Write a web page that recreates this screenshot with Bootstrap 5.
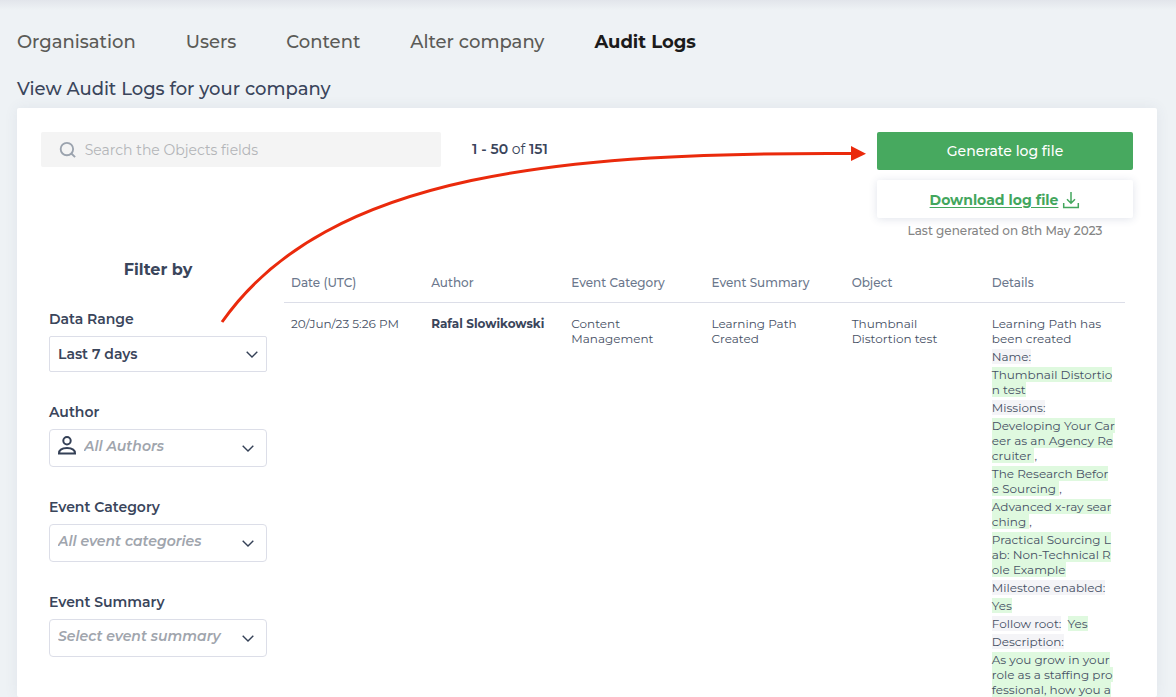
<!DOCTYPE html>
<html lang="en">
<head>
<meta charset="utf-8">
<meta name="viewport" content="width=device-width, initial-scale=1">
<title>Audit Logs</title>
<link href="https://cdn.jsdelivr.net/npm/bootstrap@5.3.0/dist/css/bootstrap.min.css" rel="stylesheet">
<style>
  body { font-family: Montserrat, Inter, sans-serif; background: #eef2f5; color: #3a455b; font-size: 14px; line-height: 20px; }
  .page-shell { padding: 0 19px 0 17px; background: linear-gradient(#e2e5eb, #eef2f5 10px); }
  .main-tabs { padding-top: 30px; gap: 50px; }
  .main-tabs .nav-link { padding: 0; font-size: 18px; line-height: 24px; font-weight: 500; color: #5b5b57; }
  .main-tabs .nav-link.active { color: #1b1b1b; font-weight: 700; }
  .page-title { margin: 23px 0 7px; font-size: 18px; line-height: 24px; font-weight: 500; }
  .log-panel { background: #fff; border-radius: 2px; padding: 24px 24px 0; box-shadow: 0 0 14px rgba(60, 80, 120, .08); }
  .top-bar { min-height: 124px; gap: 31px; }
  .search-box { width: 400px; height: 35px; padding: 1px 18px 0; gap: 9px; background: #f4f4f4; border-radius: 2px; }
  .search-box input { font-size: 14px; color: #3a455b; }
  .search-box input::placeholder { color: #b3b5b8; opacity: 1; }
  .result-count { padding-top: 7px; }
  .result-count b { font-weight: 600; }
  .log-actions { width: 256px; gap: 10px; }
  .log-actions .btn { height: 38px; padding: 0; border: 0; border-radius: 2px; font-size: 14px; }
  .log-actions .btn-generate, .log-actions .btn-generate:hover { background: #47a95f; color: #fff; font-weight: 500; }
  .btn-download, .btn-download:hover { background: #fff; color: #43a65d; box-shadow: 0 1px 8px rgba(60, 80, 130, .16); }
  .log-actions .btn-download { padding-top: 2px; font-weight: 700; }
  .btn-download span { text-decoration: underline; text-underline-offset: 2px; }
  .generated-note { margin-top: -7px; color: #858585; font-size: 12px; font-weight: 500; }
  .log-body { padding: 0 8px; gap: 17px; }
  .filters { width: 218px; flex: none; }
  .filters h2 { margin: 4px 0 29px; font-size: 16px; line-height: 20px; font-weight: 700; }
  .filters .form-label { margin: 0 0 7px; font-size: 14px; font-weight: 600; line-height: 20px; }
  .filter-field { margin-bottom: 30px; }
  .filter-field .form-select {
    height: 38px; padding: 0 32px 5px 8px; border: 1px solid #dcdee8; border-radius: 4px; color: #a0a5ad;
    font-size: 14px; line-height: 20px; font-style: italic; font-weight: 600;
    background: #fff url("data:image/svg+xml,%3Csvg xmlns='http://www.w3.org/2000/svg' viewBox='0 0 12 7'%3E%3Cpath d='M.7.7 6 6 11.3.7' fill='none' stroke='%23344056' stroke-width='1.4'/%3E%3C/svg%3E") no-repeat right 12px center / 12px 7px;
  }
  .filter-field .form-select.is-chosen { height: 36px; padding-bottom: 0; border-radius: 2px; color: #3a455b; font-style: normal; background-position: right 8px center; }
  .filter-field .form-select.has-icon { padding-left: 34px; }
  .author-icon { left: 8px; top: 7px; pointer-events: none; }
  .log-table { table-layout: fixed; margin: 12px 0 0; color: #465064; font-size: 12px; line-height: 15px; white-space: nowrap; }
  .log-table > :not(caption) > * > * { padding: 13px 0 0 7px; border: 0; color: inherit; background: none; vertical-align: top; }
  .log-table > thead > tr > th { padding: 7px 0 12px 7px; border-bottom: 1px solid #dcdee8; color: #6b778c; font-weight: 500; }
  .log-table b { color: #3a455b; }
  .change-line { margin-top: 3px; }
  .change-key { background: #f4f4f7; }
  .change-value { background: #dff9df; }
  .pointer-arrow { left: 0; top: 0; pointer-events: none; }
</style>
</head>
<body>
<div class="page-shell vh-100 overflow-hidden position-relative d-flex flex-column">
  <nav class="nav main-tabs" aria-label="Administration">
    <a class="nav-link" href="#">Organisation</a>
    <a class="nav-link" href="#">Users</a>
    <a class="nav-link" href="#">Content</a>
    <a class="nav-link" href="#">Alter company</a>
    <a class="nav-link active" href="#" aria-current="page">Audit Logs</a>
  </nav>
  <h1 class="page-title">View Audit Logs for your company</h1>

  <main class="log-panel flex-grow-1">
    <div class="top-bar d-flex align-items-start">
      <label class="search-box d-flex align-items-center">
        <svg width="18" height="18" viewBox="0 0 18 18" fill="none" stroke="#9ba3ae" stroke-width="2" aria-hidden="true"><circle cx="8.500" cy="8" r="6.700"/><path d="m13.300 12.800 4 3.800"/></svg>
        <input class="form-control border-0 bg-transparent p-0 shadow-none" type="search" placeholder="Search the Objects fields" aria-label="Search the Objects fields">
      </label>
      <div class="result-count"><b>1 - 50</b> of <b>151</b></div>
      <div class="log-actions ms-auto d-flex flex-column">
        <button class="btn btn-generate" type="button">Generate log file</button>
        <button class="btn btn-download d-flex justify-content-center align-items-center gap-1" type="button">
          <span>Download log file</span>
          <svg width="18" height="18" viewBox="0 0 18 18" fill="none" stroke="#43a65d" stroke-width="1.500" aria-hidden="true"><path d="M9 1v11M5 8.200l4 4 4-4M1.700 12v4.500h14.600V12"/></svg>
        </button>
        <div class="generated-note text-center">Last generated on 8th May 2023</div>
      </div>
    </div>

    <div class="log-body d-flex align-items-start">
      <form class="filters">
        <h2 class="text-center">Filter by</h2>
        <div class="filter-field">
          <label class="form-label d-block" for="range">Data Range</label>
          <select class="form-select is-chosen" id="range"><option>Last 7 days</option></select>
        </div>
        <div class="filter-field">
          <label class="form-label d-block" for="author">Author</label>
          <div class="position-relative">
            <select class="form-select has-icon" id="author"><option>All Authors</option></select>
            <svg class="author-icon position-absolute" width="20" height="20" viewBox="0 0 20 20" fill="none" stroke="#344056" stroke-width="2" aria-hidden="true"><circle cx="10" cy="4.700" r="3.700"/><path d="M2 17.500c0-4 3.300-5.500 8-5.500s8 1.500 8 5.500z"/></svg>
          </div>
        </div>
        <div class="filter-field">
          <label class="form-label d-block" for="category">Event Category</label>
          <select class="form-select" id="category"><option>All event categories</option></select>
        </div>
        <div class="filter-field">
          <label class="form-label d-block" for="summary">Event Summary</label>
          <select class="form-select" id="summary"><option>Select event summary</option></select>
        </div>
      </form>

      <table class="table log-table flex-grow-1">
        <thead>
          <tr><th scope="col">Date (UTC)</th><th scope="col">Author</th><th scope="col">Event Category</th><th scope="col">Event Summary</th><th scope="col">Object</th><th scope="col">Details</th></tr>
        </thead>
        <tbody>
          <tr>
            <td>20/Jun/23 5:26 PM</td>
            <td><b>Rafal Slowikowski</b></td>
            <td>Content<br>Management</td>
            <td>Learning Path<br>Created</td>
            <td>Thumbnail<br>Distortion test</td>
            <td>
              <div>Learning Path has<br>been created</div>
              <div class="change-line"><span class="change-key">Name:</span></div>
              <div class="change-line"><span class="change-value">Thumbnail Distortio<br>n test</span></div>
              <div class="change-line"><span class="change-key">Missions:</span></div>
              <div class="change-line"><span class="change-value">Developing Your Car<br>eer as an Agency Re<br>cruiter </span>,</div>
              <div class="change-line"><span class="change-value">The Research Befor<br>e Sourcing </span>,</div>
              <div class="change-line"><span class="change-value">Advanced x-ray sear<br>ching </span>,</div>
              <div class="change-line"><span class="change-value">Practical Sourcing L<br>ab: Non-Technical R<br>ole Example</span></div>
              <div class="change-line"><span class="change-key">Milestone enabled:</span></div>
              <div class="change-line"><span class="change-value">Yes</span></div>
              <div class="change-line"><span class="change-key">Follow root:</span>&nbsp; <span class="change-value">Yes</span></div>
              <div class="change-line"><span class="change-key">Description:</span></div>
              <div class="change-line"><span class="change-value">As you grow in your<br>role as a staffing pro<br>fessional, how you a</span></div>
            </td>
          </tr>
        </tbody>
      </table>
    </div>
  </main>

  <svg class="pointer-arrow position-absolute" width="880" height="340" viewBox="0 0 880 340" fill="none" aria-hidden="true">
    <path d="M222 322C328 171 570 152 854 153.500" stroke="#ea2a0c" stroke-width="3"/>
    <path d="M851 146v15l15-7.300z" fill="#ea2a0c"/>
  </svg>
</div>
<script src="https://cdn.jsdelivr.net/npm/bootstrap@5.3.0/dist/js/bootstrap.bundle.min.js"></script>
</body>
</html>
